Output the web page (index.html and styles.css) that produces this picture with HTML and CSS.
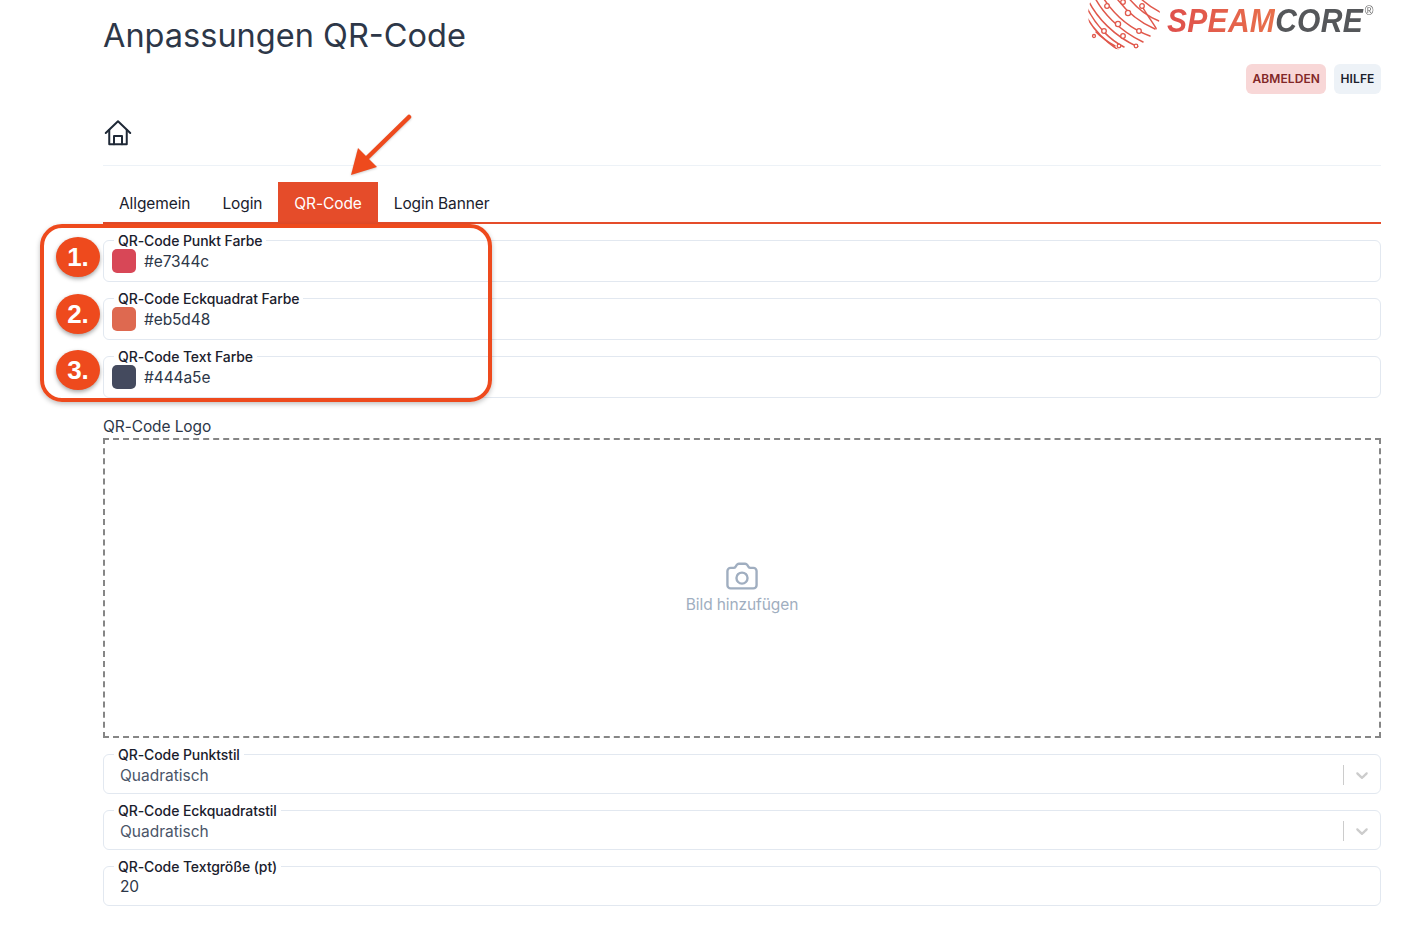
FILE: index.html
```html
<!DOCTYPE html>
<html lang="de">
<head>
<meta charset="utf-8">
<title>Anpassungen QR-Code</title>
<link rel="stylesheet" href="styles.css">
</head>
<body>
<main class="page">
  <header class="top">
    <h1 class="title">Anpassungen QR-Code</h1>
    <div class="top-right">
      <div class="logo">
        <svg class="globe" width="72" height="52" viewBox="0 0 72 52" fill="none" stroke="#e0584c" stroke-width="1.5" stroke-linecap="round">
          <defs><clipPath id="ball"><circle cx="36" cy="14" r="36"/></clipPath></defs>
          <g clip-path="url(#ball)">
            <path d="M-2 16C6 31 18 42 33 52"/><path d="M-1 8C8 26 22 40 36 47"/><path d="M0 0C9 18 26 36 50 47"/>
            <path d="M6 -4C14 12 30 30 55 42"/><path d="M14 -4C24 12 40 28 62 36"/><path d="M27 -4C34 6 46 20 67 29"/><path d="M39 -4C46 5 56 15 71 21"/><path d="M50 -4C56 2 62 7 72 12"/>
            <path d="M8 32C14 38 20 42 27 46"/><path d="M54 6C58 14 66 24 69 30"/>
          </g>
          <g fill="#fff" stroke-width="1.3"><circle cx="19" cy="6" r="2.3"/><circle cx="35" cy="2" r="2.3"/><circle cx="54" cy="6" r="2.3"/><circle cx="40" cy="13" r="2.6"/><circle cx="30" cy="24" r="2.6"/><circle cx="16" cy="31" r="2.3"/><circle cx="35" cy="36" r="2.3"/><circle cx="51" cy="31" r="2.3"/><circle cx="31" cy="46" r="1.8"/><circle cx="6" cy="36" r="1.5"/><circle cx="48" cy="46" r="1.8"/></g>
        </svg>
        <span class="wordmark"><span class="wm-red">SPEAM</span><span class="wm-gray">CORE</span><sup class="reg">®</sup></span>
      </div>
      <div class="actions">
        <button class="btn btn-red">ABMELDEN</button>
        <button class="btn btn-gray">HILFE</button>
      </div>
    </div>
  </header>

  <nav class="crumb">
    <svg width="30" height="30" viewBox="0 0 24 24" fill="none" stroke="#1f2937" stroke-width="1.6" stroke-linecap="round" stroke-linejoin="round">
      <path d="M2.2 12 12 2.6 21.8 12"/><path d="M5 9.6V21h14V9.6"/><path d="M8.8 21v-6.6h6.4V21"/>
    </svg>
  </nav>

  <div class="tabs">
    <a class="tab">Allgemein</a>
    <a class="tab">Login</a>
    <a class="tab tab-active">QR-Code</a>
    <a class="tab">Login Banner</a>
  </div>

  <form class="form">
    <div class="group">
      <fieldset class="field field-color"><legend>QR-Code Punkt Farbe</legend><span class="swatch swatch-1"></span><span class="val">#e7344c</span></fieldset>
      <fieldset class="field field-color"><legend>QR-Code Eckquadrat Farbe</legend><span class="swatch swatch-2"></span><span class="val">#eb5d48</span></fieldset>
      <fieldset class="field field-color"><legend>QR-Code Text Farbe</legend><span class="swatch swatch-3"></span><span class="val">#444a5e</span></fieldset>
    </div>

    <div class="logo-block">
      <div class="logo-label">QR-Code Logo</div>
      <div class="drop">
        <svg width="38" height="38" viewBox="0 0 24 24" fill="none" stroke="#a0aec0" stroke-width="1.5" stroke-linejoin="round" stroke-linecap="round">
          <path d="M2.8 8.2A2 2 0 0 1 4.8 6.2H6.6a1.6 1.6 0 0 0 1.4-.8l.7-1.1a1.6 1.6 0 0 1 1.3-.7h4a1.6 1.6 0 0 1 1.3.7l.7 1.1a1.6 1.6 0 0 0 1.4.8h1.8a2 2 0 0 1 2 2v9a2 2 0 0 1-2 2H4.8a2 2 0 0 1-2-2z"/>
          <circle cx="12" cy="12.7" r="3.5"/>
        </svg>
        <span class="drop-text">Bild hinzufügen</span>
      </div>
    </div>

    <div class="group">
      <fieldset class="field field-select"><legend>QR-Code Punktstil</legend><span class="val val-muted">Quadratisch</span><span class="sep"></span><svg class="chev" width="20" height="20" viewBox="0 0 20 20"><path fill="#cccccc" d="M4.516 7.548c0.436-0.446 1.043-0.481 1.576 0l3.908 3.747 3.908-3.747c0.533-0.481 1.141-0.446 1.574 0 0.436 0.445 0.408 1.197 0 1.615-0.406 0.418-4.695 4.502-4.695 4.502-0.217 0.223-0.502 0.335-0.787 0.335s-0.57-0.112-0.789-0.335c0 0-4.287-4.084-4.695-4.502s-0.436-1.17 0-1.615z"/></svg></fieldset>
      <fieldset class="field field-select"><legend>QR-Code Eckquadratstil</legend><span class="val val-muted">Quadratisch</span><span class="sep"></span><svg class="chev" width="20" height="20" viewBox="0 0 20 20"><path fill="#cccccc" d="M4.516 7.548c0.436-0.446 1.043-0.481 1.576 0l3.908 3.747 3.908-3.747c0.533-0.481 1.141-0.446 1.574 0 0.436 0.445 0.408 1.197 0 1.615-0.406 0.418-4.695 4.502-4.695 4.502-0.217 0.223-0.502 0.335-0.787 0.335s-0.57-0.112-0.789-0.335c0 0-4.287-4.084-4.695-4.502s-0.436-1.17 0-1.615z"/></svg></fieldset>
      <fieldset class="field field-select"><legend>QR-Code Textgröße (pt)</legend><span class="val val-num">20</span></fieldset>
    </div>
  </form>

  <div class="annot">
    <div class="annot-box"></div>
    <span class="badge badge-1">1.</span>
    <span class="badge badge-2">2.</span>
    <span class="badge badge-3">3.</span>
    <svg class="annot-arrow" width="70" height="70" viewBox="0 0 70 70">
      <path d="M60 4 18 45" stroke="#ee4a1d" stroke-width="4.5" stroke-linecap="round" fill="none"/>
      <path d="M2 62 9 35 28 54z" fill="#ee4a1d"/>
    </svg>
  </div>
</main>
</body>
</html>
```
FILE: styles.css
```css
* { box-sizing: border-box; }
html, body { margin: 0; padding: 0; background: #fff; }
body { font-family: Inter, "Noto Sans", sans-serif; color: #1a202c; height: 950px; overflow: hidden; }
.page { position: relative; padding: 0 27px 0 103px; }

.top { display: flex; justify-content: space-between; height: 94px; }
.title { margin: 15px 0 0; font-size: 32.5px; line-height: 42px; font-weight: 400; color: #2d3748; }
.top-right { display: flex; flex-direction: column; align-items: flex-end; }
.logo { display: flex; align-items: flex-start; height: 52px; margin-right: 5px; }
.globe { display: block; margin-right: 7px; }
.wordmark { font-family: "Liberation Sans", sans-serif; font-weight: 700; font-style: italic; font-size: 33px; line-height: 40px; letter-spacing: 0.3px; transform: scaleX(0.91); transform-origin: left; display: block; width: 209px; white-space: nowrap; margin-top: 1px; }
.wm-red { background: linear-gradient(90deg, #df4f4c, #e8704b); -webkit-background-clip: text; background-clip: text; color: transparent; }
.wm-gray { color: #55575a; }
.reg { font-size: 13px; font-weight: 400; font-style: normal; color: #666; vertical-align: 17px; line-height: 0; margin-left: 2px; }
.actions { display: flex; gap: 8px; margin-top: 12px; }
.btn { height: 30px; border: 0; border-radius: 6px; padding: 0 6px 1px; font-family: inherit; font-size: 12px; font-weight: 600; letter-spacing: 0.1px; }
.btn-red { background: #f8d7d7; color: #822727; }
.btn-gray { width: 47px; background: #edf2f7; color: #1a202c; }

.crumb { height: 72px; padding-top: 24px; border-bottom: 1px solid #edf2f7; }
.crumb svg { display: block; }

.tabs { display: flex; margin-top: 16px; height: 42px; border-bottom: 2px solid #e54c2a; }
.tab { height: 40px; padding: 0 16px; font-size: 15.5px; letter-spacing: -0.1px; line-height: 44px; color: #1a202c; }
.tab-active { background: #e54c2a; color: #fff; }

.form { display: block; padding-top: 8px; }
.group { display: flex; flex-direction: column; gap: 8px; }
.field { position: relative; display: flex; align-items: flex-start; margin: 0; padding: 0; min-width: 0; border: 1px solid #e2e8f0; border-radius: 6px; }
.field legend { margin-left: 10px; padding: 0 4px; font-size: 14px; line-height: 17px; height: 17px; font-weight: 500; letter-spacing: -0.09px; color: #1a202c; }
.field-color { height: 50px; }
.field-select { height: 48px; }
.swatch { width: 24px; height: 24px; border-radius: 5px; margin: 0 8px; }
.swatch-1 { background: #d84757; }
.swatch-2 { background: #de6950; }
.swatch-3 { background: #444a5e; }
.val { margin-top: 1px; font-size: 15.5px; letter-spacing: -0.1px; line-height: 24px; color: #2d3748; }
.field-select .val { margin-left: 16px; }
.field-select .val-num { margin-top: 0; }
.val-muted { color: #4a5568; letter-spacing: 0; }
.sep { width: 1px; height: 20px; background: #cccccc; margin-left: auto; margin-top: 2px; }
.chev { margin: 2px 8px 0 8px; }

.logo-block { margin-top: 16px; }
.logo-label { height: 24px; font-size: 15.5px; letter-spacing: -0.1px; line-height: 26px; color: #2d3748; }
.drop { display: flex; flex-direction: column; align-items: center; justify-content: center; height: 300px; padding-bottom: 4px; border: 2px dashed #868686; margin-bottom: 8px; }
.drop svg { display: block; margin-bottom: -1px; }
.drop-text { font-size: 15.5px; letter-spacing: -0.1px; line-height: 20px; color: #a0aec0; }

.annot { position: absolute; inset: 0; pointer-events: none; }
.annot-box { position: absolute; left: 40px; top: 224px; width: 452px; height: 178px; border: 4px solid #ee4a1d; border-radius: 22px; box-shadow: 0 2px 5px rgba(0,0,0,.25); }
.badge { position: absolute; left: 56px; width: 44px; height: 40px; border-radius: 50%; background: #ee4a1d; color: #fff; font-family: "Liberation Sans", sans-serif; font-weight: 700; font-size: 26px; line-height: 41px; text-align: center; box-shadow: 0 2px 4px rgba(0,0,0,.35); }
.badge-1 { top: 237px; }
.badge-2 { top: 294px; }
.badge-3 { top: 350px; }
.annot-arrow { position: absolute; left: 349px; top: 113px; filter: drop-shadow(0 1px 1px rgba(0,0,0,.2)); }
```
